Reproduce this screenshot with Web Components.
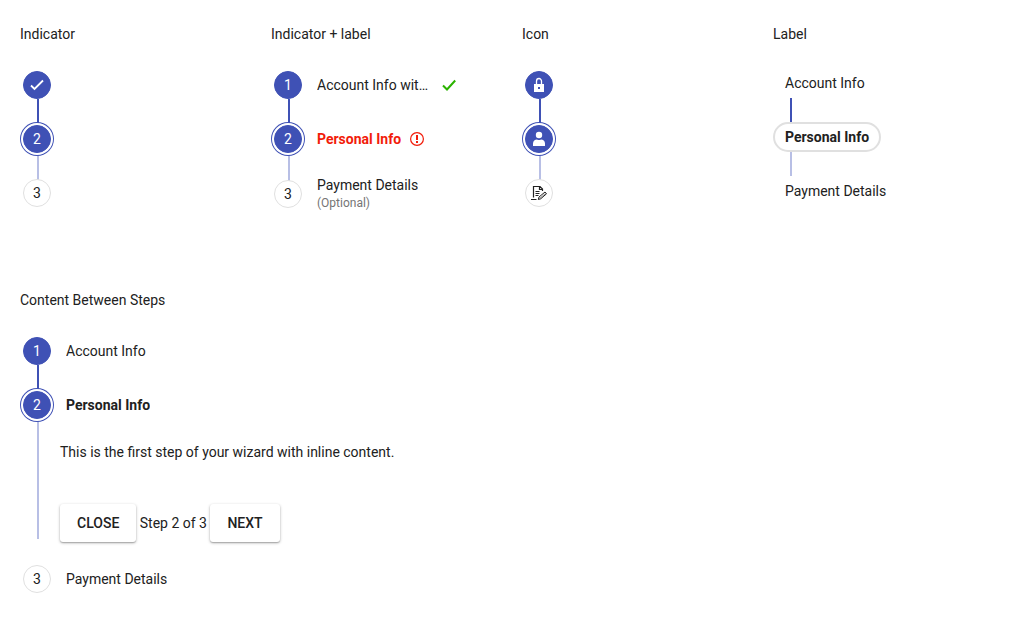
<!DOCTYPE html>
<html lang="en">
<head>
<meta charset="utf-8">
<title>Vertical steppers</title>
<style>
  body {
    margin: 0;
    background: #fff;
    color: #212121;
    font: 14px/20px Roboto, sans-serif;
  }
</style>
</head>
<body>
<stepper-page>
  <step-list heading="Indicator">
    <step-item state="done" name="Account Info"><step-icon slot="mark" name="check"></step-icon></step-item>
    <step-item state="current" name="Personal Info">2</step-item>
    <step-item name="Payment Details" last>3</step-item>
  </step-list>
  <step-list heading="Indicator + label">
    <step-item state="done">1<span slot="label">Account Info with a long name</span><step-icon slot="status" name="success"></step-icon></step-item>
    <step-item state="current" invalid>2<span slot="label">Personal Info</span><step-icon slot="status" name="error"></step-icon></step-item>
    <step-item last>3<span slot="label">Payment Details</span><span slot="hint">(Optional)</span></step-item>
  </step-list>
  <step-list heading="Icon">
    <step-item state="done" name="Account Info"><step-icon slot="mark" name="lock"></step-icon></step-item>
    <step-item state="current" name="Personal Info"><step-icon slot="mark" name="person"></step-icon></step-item>
    <step-item name="Payment Details" last><step-icon slot="mark" name="form"></step-icon></step-item>
  </step-list>
  <step-list heading="Label">
    <label-step state="done">Account Info</label-step>
    <label-step state="current">Personal Info</label-step>
    <label-step last>Payment Details</label-step>
  </step-list>
  <step-list heading="Content Between Steps" slot="wide">
    <step-item state="done">1<span slot="label">Account Info</span></step-item>
    <step-item state="current" expanded>2<span slot="label">Personal Info</span><wizard-panel slot="content"></wizard-panel></step-item>
    <step-item last>3<span slot="label">Payment Details</span></step-item>
  </step-list>
</stepper-page>

<script>
const define = (name, markup, setup) => {
  const template = document.createElement('template');
  template.innerHTML = markup;
  customElements.define(name, class extends HTMLElement {
    constructor() {
      super();
      this.attachShadow({ mode: 'open' }).append(template.content.cloneNode(true));
    }
    connectedCallback() {
      if (setup) setup(this, this.shadowRoot);
    }
  });
};

define('stepper-page', `
  <style>
    :host { display: flex; flex-direction: column; gap: 78px; padding: 24px 0 24px 20px; }
    .columns { display: grid; grid-template-columns: repeat(4, minmax(0, 1fr)); align-items: start; }
  </style>
  <div class="columns"><slot></slot></div>
  <slot name="wide"></slot>
`);

define('step-list', `
  <style>
    :host { display: flex; flex-direction: column; gap: 24px; }
    h2 { margin: 0; font: inherit; }
    div { display: flex; flex-direction: column; }
  </style>
  <h2></h2>
  <div role="list"><slot></slot></div>
`, (host, root) => {
  root.querySelector('h2').textContent = host.getAttribute('heading');
});

define('step-item', `
  <style>
    :host { display: block; padding-top: 3px; margin-bottom: -3px; }
    :host([last]) { margin-bottom: 3px; }
    button {
      display: flex; align-items: center; gap: 12px; min-height: 28px;
      margin: 0; padding: 0; border: 0; background: none;
      color: inherit; font: inherit; text-align: left; cursor: pointer;
    }
    .rail { display: flex; justify-content: center; width: 34px; flex: none; }
    .circle {
      display: flex; align-items: center; justify-content: center; box-sizing: border-box;
      position: relative; z-index: 1;
      width: 28px; height: 28px; border: 1px solid #e0e0e0; border-radius: 50%; background: #fff;
    }
    :host([state]) .circle { border-color: #3f51b5; background: #3f51b5; color: #fff; }
    :host([state="current"]) .circle { box-shadow: 0 0 0 2px #fff, 0 0 0 3px #3f51b5; }
    .text { display: flex; align-items: center; gap: 8px; margin: -3px 0; line-height: 18px; }
    .words { display: block; max-width: 116px; }
    ::slotted([slot="label"]) { display: block; overflow: hidden; white-space: nowrap; text-overflow: ellipsis; }
    ::slotted([slot="hint"]) { display: block; font-size: 12px; color: #757575; }
    :host([state="current"]) .words { font-weight: 700; }
    :host([invalid]) .text { color: #f21c0a; }
    .below { display: flex; min-height: 26px; }
    .line { flex: none; width: 2px; margin: 0 21px -2px 17px; background: #b8bfe5; }
    :host([state="done"]) .line { background: #3f51b5; }
    :host([expanded]) .line { margin-bottom: 26px; }
    :host([last]) .below { display: none; }
  </style>
  <div role="listitem">
    <button type="button">
      <span class="rail"><span class="circle"><slot name="mark"></slot><slot></slot></span></span>
      <span class="text">
        <span class="words"><slot name="label"></slot><slot name="hint"></slot></span>
        <slot name="status"></slot>
      </span>
    </button>
    <div class="below"><span class="line"></span><slot name="content"></slot></div>
  </div>
`, (host, root) => {
  const button = root.querySelector('button');
  if (host.hasAttribute('name')) button.setAttribute('aria-label', host.getAttribute('name'));
  if (host.getAttribute('state') === 'current') button.setAttribute('aria-current', 'step');
});

define('label-step', `
  <style>
    :host { display: block; }
    button {
      display: block; height: 30px; margin: 0; padding: 0 10px;
      border: 2px solid transparent; border-radius: 15px; background: #fff;
      color: inherit; font: inherit; cursor: pointer;
    }
    :host([state="current"]) button { border-color: #e0e0e0; font-weight: 700; }
    .line { width: 2px; height: 24px; margin-left: 17px; background: #b8bfe5; }
    :host([state="done"]) .line { background: #3f51b5; }
    :host([last]) .line { display: none; }
  </style>
  <div role="listitem">
    <button type="button"><slot></slot></button>
    <div class="line"></div>
  </div>
`);

define('wizard-panel', `
  <style>
    :host { display: block; padding: 23px 0; }
    p { margin: 0 0 42px; }
    button {
      height: 38px; padding: 0 17px; border: 0; border-radius: 3px; background: #fff;
      color: inherit; font: 500 14px/20px Roboto, sans-serif; cursor: pointer;
      box-shadow: 0 1px 3px rgba(0, 0, 0, .3), 0 1px 1px rgba(0, 0, 0, .16);
    }
  </style>
  <p>This is the first step of your wizard with inline content.</p>
  <div><button type="button">CLOSE</button> Step 2 of 3 <button type="button">NEXT</button></div>
`);

const icons = {
  check: '<path d="M2 8.5l3.5 3.5L14 3.5" fill="none" stroke="currentColor" stroke-width="1.8"/>',
  success: '<path d="M2 8.5l4 4L14.2 3.5" fill="none" stroke="#2bb300" stroke-width="2"/>',
  error: '<circle cx="8" cy="8" r="6.4" fill="none" stroke="currentColor" stroke-width="1.2"/><path d="M7 4h2v5H7zM7 10h2v2H7z" fill="currentColor"/>',
  lock: '<path d="M5.5 8V4.300a2.500 2.800 0 0 1 5 0V8" fill="none" stroke="currentColor" stroke-width="1.3"/><path fill-rule="evenodd" d="M3 7h10v8H3zM7 10v2h2v-2z" fill="currentColor"/>',
  person: '<circle cx="8" cy="4" r="3.2" fill="currentColor"/><path d="M2 15v-2.500C2 10 4 8.500 6 8.500q2 1 4 0c2 0 4 1.500 4 4V15z" fill="currentColor"/>',
  form: '<g fill="none" stroke="currentColor"><path d="M11.500 6V4L9 1.500H2.500v11M8.500 1.500v3h3M0 14.500h5.500M4.500 6.500h4M4.500 8.500h4M4.500 10.500h3" stroke-width="1.2"/><path d="M7.300 14.500l.7-2.500 6-5 1.500 1.800-5.800 5z" stroke-width="1"/><path d="M8.500 13.500l6-5" stroke-width=".5"/></g>'
};

define('step-icon', `
  <style>
    :host { display: block; flex: none; width: 16px; height: 16px; }
    svg { display: block; width: 16px; height: 16px; }
  </style>
  <svg viewBox="0 0 16 16" aria-hidden="true"></svg>
`, (host, root) => {
  root.querySelector('svg').innerHTML = icons[host.getAttribute('name')];
});
</script>
</body>
</html>
